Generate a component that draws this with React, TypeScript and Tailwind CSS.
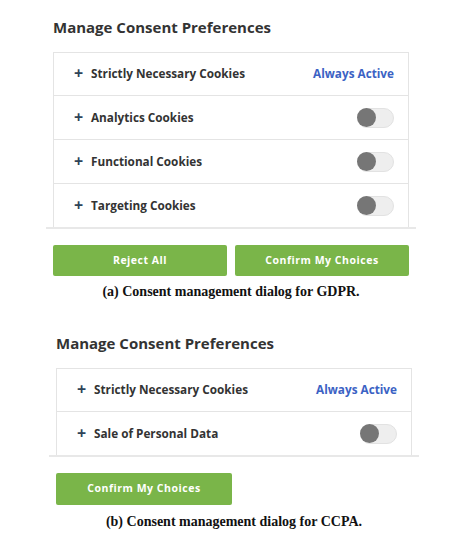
const sans = "font-['Open_Sans','Liberation_Sans',sans-serif]"
const serif = "font-['Liberation_Serif','DejaVu_Serif',serif]"

interface Row {
  label: string
  alwaysActive?: boolean
}

function Toggle() {
  return (
    <div className="w-[37px] h-[20px] rounded-full bg-[#eeeeee] border border-[#e2e2e2] flex items-center">
      <div className="w-[19px] h-[19px] rounded-full bg-[#767676] -ml-px" />
    </div>
  )
}

function PreferenceBox({ rows }: { rows: Row[] }) {
  return (
    <div>
      <div className="border border-[#e4e4e4] border-b-0 bg-white">
        {rows.map((row, i) => (
          <div
            key={row.label}
            className={
              "flex items-center justify-between pl-[20px] pr-[14px] " +
              (i > 0 ? "h-[44px] border-t border-[#e4e4e4]" : "h-[42px]")
            }
          >
            <div className="flex items-center">
              <span className="text-[16px] font-bold text-[#2f4358] w-[17px] leading-none -mt-[2px]">+</span>
              <span className="text-[11.75px] font-bold text-[#333333]">{row.label}</span>
            </div>
            {row.alwaysActive ? (
              <span className="text-[11.75px] font-bold text-[#3b62c4]">Always Active</span>
            ) : (
              <Toggle />
            )}
          </div>
        ))}
      </div>
      <div className="-mx-[7px] h-[2px] bg-[#e8e8e8]" />
    </div>
  )
}

function GreenButton({ label, className }: { label: string; className: string }) {
  return (
    <button
      className={
        "rounded-[2px] bg-[#7ab549] text-white text-[10.5px] font-bold tracking-[0.05em] " + className
      }
    >
      {label}
    </button>
  )
}

export default function App() {
  return (
    <div className={"w-[466px] h-[553px] bg-white " + sans}>
      <div className="ml-[53px] w-[356px] pt-[15px]">
        <h2 className="text-[15px] font-bold text-[#333333] leading-[24px]">Manage Consent Preferences</h2>
        <div className="mt-[13px]">
          <PreferenceBox
            rows={[
              { label: "Strictly Necessary Cookies", alwaysActive: true },
              { label: "Analytics Cookies" },
              { label: "Functional Cookies" },
              { label: "Targeting Cookies" },
            ]}
          />
        </div>
        <div className="mt-[16px] flex gap-[8px]">
          <GreenButton label="Reject All" className="w-[175px] h-[31px]" />
          <GreenButton label="Confirm My Choices" className="w-[175px] h-[31px]" />
        </div>
        <p className={"mt-[6px] text-center text-[14px] leading-[20px] font-bold text-[#111111] " + serif}>
          (a) Consent management dialog for GDPR.
        </p>
      </div>

      <div className="ml-[56px] w-[356px] pt-[29px]">
        <h2 className="text-[15px] font-bold text-[#333333] leading-[24px]">Manage Consent Preferences</h2>
        <div className="mt-[13px]">
          <PreferenceBox
            rows={[
              { label: "Strictly Necessary Cookies", alwaysActive: true },
              { label: "Sale of Personal Data" },
            ]}
          />
        </div>
        <div className="mt-[16px] flex">
          <GreenButton label="Confirm My Choices" className="w-[176px] h-[32px]" />
        </div>
        <p className={"mt-[7px] text-center text-[14px] leading-[20px] font-bold text-[#111111] " + serif}>
          (b) Consent management dialog for CCPA.
        </p>
      </div>
    </div>
  )
}
